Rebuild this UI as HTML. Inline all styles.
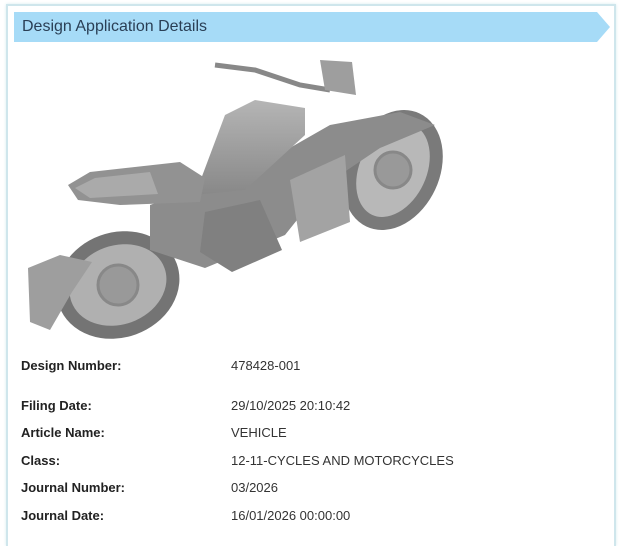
<!DOCTYPE html>
<html><head><meta charset="utf-8"><style>
html,body{margin:0;padding:0;background:#fff;width:623px;height:540px;overflow:hidden;font-family:"Liberation Sans",Arial,sans-serif}
.card{position:absolute;left:6px;top:4px;width:606px;height:540px;border:2px solid #cfe6ec;border-bottom:none;box-shadow:0 0 3px #d8ecf0}
.hdr{position:absolute;left:14px;top:12px;width:583px;height:30px;background:#a6dbf7}
.arrow{position:absolute;left:597px;top:12px;width:0;height:0;border-top:15px solid transparent;border-bottom:15px solid transparent;border-left:13px solid #a6dbf7}
.hdr span{position:absolute;left:8px;top:6px;font-size:16px;color:#2a3f55}
.row{position:absolute;left:21px;font-size:13px;color:#222}
.row b{position:absolute;left:0;white-space:nowrap}
.row span{position:absolute;left:210px;white-space:nowrap;color:#333}
</style></head><body>
<div class="card"></div>
<div class="hdr"><span>Design Application Details</span></div>
<div class="arrow"></div>
<svg style="position:absolute;left:0;top:0" width="623" height="540">
<defs><linearGradient id="g" x1="0" y1="0" x2="0" y2="1"><stop offset="0" stop-color="#b5b5b5"/><stop offset="1" stop-color="#888"/></linearGradient></defs>
<ellipse cx="393" cy="170" rx="40" ry="56" transform="rotate(25 393 170)" fill="#b8b8b8" stroke="#7a7a7a" stroke-width="13"/>
<ellipse cx="118" cy="285" rx="56" ry="46" transform="rotate(-20 118 285)" fill="#b0b0b0" stroke="#747474" stroke-width="13"/>
<circle cx="393" cy="170" r="18" fill="#999" stroke="#888" stroke-width="3"/>
<circle cx="118" cy="285" r="20" fill="#999" stroke="#888" stroke-width="3"/>
<path d="M150 205 L260 165 L330 125 L400 112 L435 125 L380 148 L325 185 L285 235 L205 268 L150 250Z" fill="#8c8c8c"/>
<path d="M290 180 L345 155 L350 222 L300 242Z" fill="#a3a3a3"/>
<path d="M195 195 L225 115 L255 100 L305 108 L305 135 L245 190Z" fill="url(#g)"/>
<path d="M68 185 L90 172 L180 162 L205 178 L200 202 L120 205 L78 200Z" fill="#929292"/>
<path d="M75 188 L95 178 L150 172 L158 194 L90 198Z" fill="#aaa"/>
<path d="M28 268 L60 255 L92 262 L72 292 L50 330 L30 322Z" fill="#9e9e9e"/>
<path d="M205 212 L260 200 L282 250 L232 272 L200 252Z" fill="#808080"/>
<path d="M215 65 L255 70 L300 85 L330 90" stroke="#888" stroke-width="5" fill="none"/>
<path d="M320 60 L352 62 L356 95 L325 90Z" fill="#9e9e9e"/>
</svg>
<div class="row" style="top:358px"><b>Design Number:</b><span>478428-001</span></div>
<div class="row" style="top:398px"><b>Filing Date:</b><span>29/10/2025 20:10:42</span></div>
<div class="row" style="top:425px"><b>Article Name:</b><span>VEHICLE</span></div>
<div class="row" style="top:453px"><b>Class:</b><span>12-11-CYCLES AND MOTORCYCLES</span></div>
<div class="row" style="top:480px"><b>Journal Number:</b><span>03/2026</span></div>
<div class="row" style="top:508px"><b>Journal Date:</b><span>16/01/2026 00:00:00</span></div>
</body></html>
